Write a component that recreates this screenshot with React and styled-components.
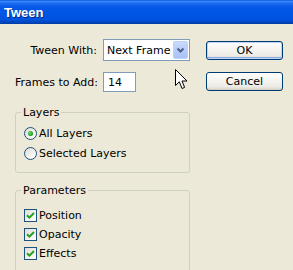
import React from "react";
import styled, { createGlobalStyle } from "styled-components";

const Global = createGlobalStyle`
  html, body { margin: 0; padding: 0; background: #ECE9D8; }
  #root { width: 293px; height: 270px; overflow: hidden; }
`;

const Window = styled.div`
  position: relative;
  width: 293px;
  height: 270px;
  background: #ECE9D8;
  font-family: "DejaVu Sans", sans-serif;
  font-size: 11px;
  color: #000;
  display: flex;
  flex-direction: column;
`;

const TitleBar = styled.div`
  height: 24px;
  flex: none;
  display: flex;
  align-items: center;
  padding-left: 4px;
  background: linear-gradient(
    to bottom,
    #0A5AE0 0%,
    #3A86F5 6%,
    #1A6AF0 14%,
    #0658E6 30%,
    #0055E4 60%,
    #0152DC 82%,
    #0044BE 94%,
    #003A9E 100%
  );
  color: #fff;
  font-family: "Liberation Sans", Arial, sans-serif;
  font-weight: bold;
  font-size: 13px;
  text-shadow: 1px 1px 0 #0A2A80;
`;

const Body = styled.div`
  display: flex;
  gap: 16px;
  padding: 15px 0 0 15px;
`;

const LeftCol = styled.div`
  width: 175px;
  display: flex;
  flex-direction: column;
`;

const Fields = styled.div`
  display: grid;
  grid-template-columns: 82px auto;
  column-gap: 6px;
  row-gap: 11px;
  align-items: center;
`;

const Label = styled.label`
  text-align: right;
  white-space: nowrap;
`;

const Select = styled.div`
  width: 87px;
  height: 22px;
  box-sizing: border-box;
  border: 1px solid #7F9DB9;
  background: #fff;
  display: flex;
  align-items: center;
  justify-content: space-between;
  padding: 1px 1px 1px 3px;
`;

const SelectText = styled.span`
  white-space: nowrap;
`;

const DropButton = styled.span`
  width: 15px;
  height: 18px;
  box-sizing: border-box;
  border: 1px solid #BAD1FC;
  border-radius: 2px;
  background: linear-gradient(to bottom, #C9DAFD 0%, #B6CBF9 55%, #A9C1F6 100%);
  display: flex;
  align-items: center;
  justify-content: center;
`;

const TextInput = styled.div`
  width: 33px;
  height: 20px;
  box-sizing: border-box;
  border: 1px solid #7F9DB9;
  background: #fff;
  display: flex;
  align-items: center;
  padding-left: 4px;
`;

const Group = styled.fieldset`
  margin: ${(p) => p.$top}px 0 0 0;
  padding: ${(p) => p.$padTop}px 8px 9px 8px;
  border: 1px solid #D0D0BF;
  border-radius: 3px;
  min-width: 0;
  display: flex;
  flex-direction: column;
`;

const Legend = styled.legend`
  padding: 0 2px;
  margin-left: -3px;
  line-height: 13px;
`;

const OptionRow = styled.div`
  height: ${(p) => p.$h}px;
  display: flex;
  align-items: center;
  gap: 2px;
  white-space: nowrap;
`;

const Radio = styled.span`
  width: 13px;
  height: 13px;
  box-sizing: border-box;
  border-radius: 50%;
  border: 1px solid #1C5180;
  background: linear-gradient(135deg, #DCDBD4 0%, #F4F3EE 60%, #FFFFFF 100%);
  display: flex;
  align-items: center;
  justify-content: center;
  flex: none;
  &::after {
    content: "";
    width: 5px;
    height: 5px;
    border-radius: 50%;
    background: radial-gradient(circle at 40% 40%, #6FE06F 0%, #21A121 60%, #1A8A1A 100%);
    display: ${(p) => (p.$checked ? "block" : "none")};
  }
`;

const Check = styled.span`
  width: 13px;
  height: 13px;
  box-sizing: border-box;
  border: 1px solid #1C5180;
  background: linear-gradient(135deg, #DCDBD4 0%, #F4F3EE 60%, #FFFFFF 100%);
  display: flex;
  align-items: center;
  justify-content: center;
  flex: none;
`;

const RightCol = styled.div`
  display: flex;
  flex-direction: column;
  gap: 12px;
  padding-top: 2px;
`;

const Button = styled.button`
  width: 77px;
  height: 19px;
  box-sizing: border-box;
  border: 1px solid #003C74;
  border-radius: 3px;
  font-family: "DejaVu Sans", sans-serif;
  font-size: 11px;
  color: #000;
  padding: 0;
  background: linear-gradient(to bottom, #FFFFFF 0%, #F6F5F1 40%, #ECEBE5 80%, #D8D2C6 100%);
  box-shadow: ${(p) =>
    p.$default
      ? "inset 0 0 0 1px #BCD4F6, inset 0 -1px 0 1px #89ADE4"
      : "inset 0 -1px 0 0 #D6D0C5"};
`;

const Cursor = styled.svg`
  position: absolute;
  left: 175px;
  top: 69px;
`;

function ChevronDown() {
  return (
    <svg width="9" height="7" viewBox="0 0 9 7">
      <path d="M1.5 1.5 L4.5 4.5 L7.5 1.5" fill="none" stroke="#4D6185" strokeWidth="2" />
    </svg>
  );
}

function CheckMark() {
  return (
    <svg width="9" height="9" viewBox="0 0 9 9">
      <path d="M1 4.2 L3.4 6.6 L8 2" fill="none" stroke="#21A121" strokeWidth="2" />
    </svg>
  );
}

export default function App() {
  return (
    <Window>
      <Global />
      <TitleBar>Tween</TitleBar>
      <Body>
        <LeftCol>
          <Fields>
            <Label>Tween With:</Label>
            <Select>
              <SelectText>Next Frame</SelectText>
              <DropButton>
                <ChevronDown />
              </DropButton>
            </Select>
            <Label>Frames to Add:</Label>
            <TextInput>14</TextInput>
          </Fields>
          <Group $top={14} $padTop={4}>
            <Legend>Layers</Legend>
            <OptionRow $h={20}>
              <Radio $checked />
              All Layers
            </OptionRow>
            <OptionRow $h={20}>
              <Radio />
              Selected Layers
            </OptionRow>
          </Group>
          <Group $top={11} $padTop={9}>
            <Legend>Parameters</Legend>
            <OptionRow $h={19}>
              <Check>
                <CheckMark />
              </Check>
              Position
            </OptionRow>
            <OptionRow $h={19}>
              <Check>
                <CheckMark />
              </Check>
              Opacity
            </OptionRow>
            <OptionRow $h={19}>
              <Check>
                <CheckMark />
              </Check>
              Effects
            </OptionRow>
          </Group>
        </LeftCol>
        <RightCol>
          <Button $default>OK</Button>
          <Button>Cancel</Button>
        </RightCol>
      </Body>
      <Cursor width="13" height="21" viewBox="0 0 13 21">
        <path
          d="M0.5 0.5 L0.5 16.5 L4.3 12.8 L7 19.5 L9.6 18.4 L7 12 L12 12 Z"
          fill="#fff"
          stroke="#000"
          strokeWidth="1"
          strokeLinejoin="miter"
        />
      </Cursor>
    </Window>
  );
}
